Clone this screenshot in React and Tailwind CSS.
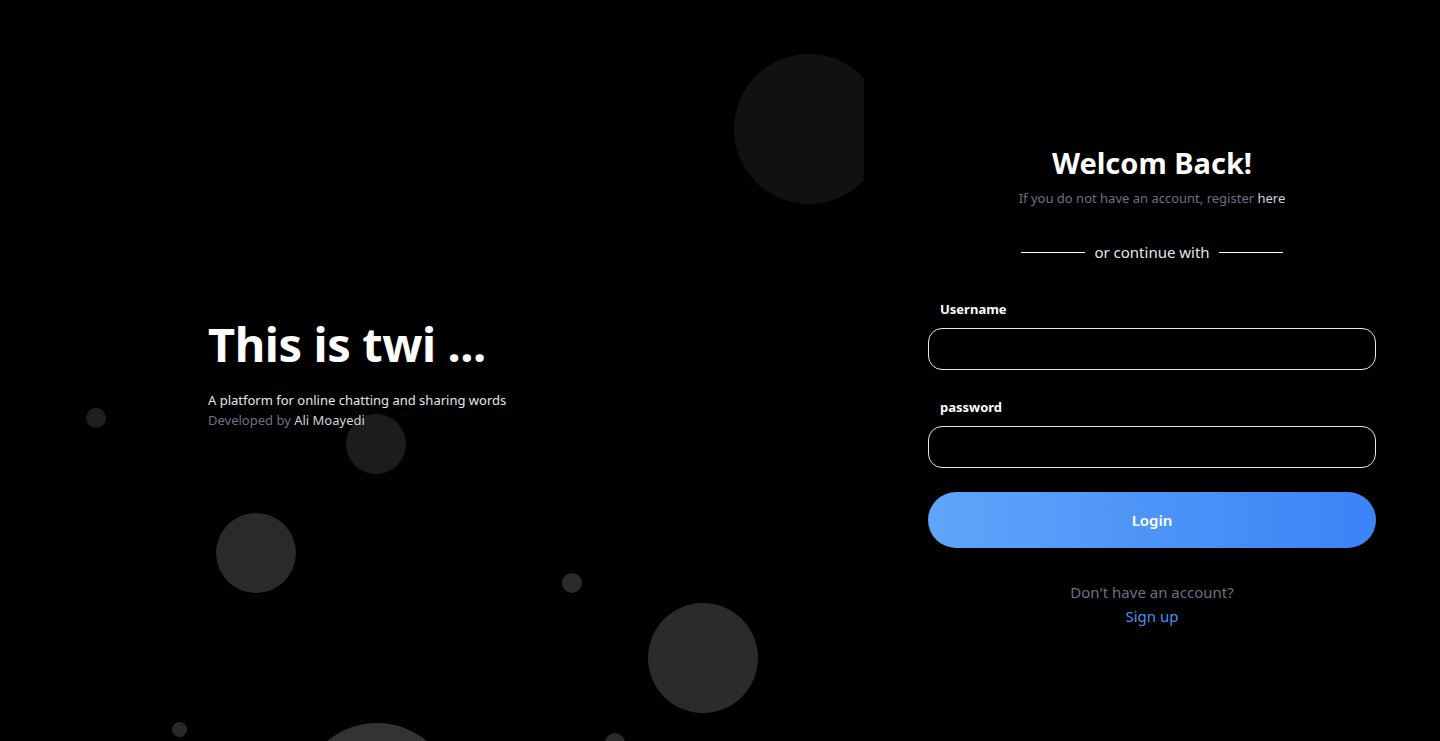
export default function App() {
  return (
    <div className="flex h-screen w-full bg-black overflow-hidden" style={{ fontFamily: '"Noto Sans", "Open Sans", sans-serif' }}>
      {/* Left panel */}
      <div className="relative w-[864px] h-full overflow-hidden">
        <div className="absolute left-[734px] top-[54px] w-[150px] h-[150px] rounded-full bg-[#111111]" />
        <div className="absolute left-[86px] top-[408px] w-[20px] h-[20px] rounded-full bg-[#1f1f1f]" />
        <div className="absolute left-[346px] top-[414px] w-[60px] h-[60px] rounded-full bg-[#1c1c1c]" />
        <div className="absolute left-[216px] top-[513px] w-[80px] h-[80px] rounded-full bg-[#2a2a2a]" />
        <div className="absolute left-[562px] top-[573px] w-[20px] h-[20px] rounded-full bg-[#2a2a2a]" />
        <div className="absolute left-[648px] top-[603px] w-[110px] h-[110px] rounded-full bg-[#2b2b2b]" />
        <div className="absolute left-[172px] top-[722px] w-[15px] h-[15px] rounded-full bg-[#2a2a2a]" />
        <div className="absolute left-[299px] top-[723px] w-[156px] h-[156px] rounded-full bg-[#333333]" />
        <div className="absolute left-[605px] top-[733px] w-[20px] h-[20px] rounded-full bg-[#2a2a2a]" />

        <div className="relative flex h-full flex-col justify-center pl-[208px] pt-[9px]">
          <h1 className="text-[47px] font-bold leading-[48px] text-white tracking-[-0.4px]">This is twi ...</h1>
          <p className="mt-[22px] text-[13px] leading-[20px] text-[#e5e7eb]">A platform for online chatting and sharing words</p>
          <p className="text-[13px] leading-[20px] text-[#6b7280]">
            Developed by <span className="text-[#d1d5db]">Ali Moayedi</span>
          </p>
        </div>
      </div>

      {/* Right panel */}
      <div className="flex flex-1 flex-col items-center pt-[145px]">
        <div className="flex w-[448px] flex-col">
          <h2 className="text-center text-[29px] font-bold leading-[36px] text-white">Welcom Back!</h2>
          <p className="mt-[7px] text-center text-[13px] leading-[20px] text-[#6b7280]">
            If you do not have an account, register <span className="text-[#d1d5db]">here</span>
          </p>
          <div className="mt-[32px] flex items-center justify-center gap-[9px]">
            <div className="h-px w-16 bg-white" />
            <span className="text-[15px] leading-[24px] text-[#e5e7eb]">or continue with</span>
            <div className="h-px w-16 bg-white" />
          </div>

          <label className="mt-[35px] pl-3 text-[13px] font-bold leading-[20px] text-white">Username</label>
          <input type="text" className="mt-[9px] h-[42px] w-full rounded-[14px] border border-[#e5e7eb] bg-black px-4 text-white outline-none" />

          <label className="mt-[27px] pl-3 text-[13px] font-bold leading-[20px] text-white">password</label>
          <input type="password" className="mt-[9px] h-[42px] w-full rounded-[14px] border border-[#e5e7eb] bg-black px-4 text-white outline-none" />

          <button className="mt-[24px] h-[56px] w-full rounded-full bg-gradient-to-r from-[#60a5fa] to-[#3b82f6] text-[15px] font-semibold text-white">
            Login
          </button>

          <p className="mt-[32px] text-center text-[15px] leading-[24px] text-[#6b7280]">Don't have an account?</p>
          <p className="text-center text-[15px] leading-[24px] text-[#4a8ff5]">Sign up</p>
        </div>
      </div>
    </div>
  );
}
